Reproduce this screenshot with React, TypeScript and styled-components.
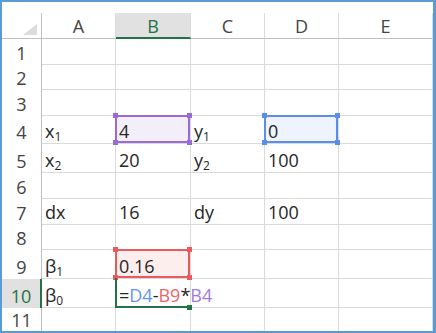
import React from 'react'
import styled, { createGlobalStyle } from 'styled-components'

type Tone = 'purple' | 'blue' | 'red'

interface ICell {
	content?: React.ReactNode
	range?: Tone
	active?: boolean
}

const tones: Record<Tone, { line: string; fill: string; text: string }> = {
	purple: { line: '#9a6bd4', fill: '#f2eefa', text: '#a37ade' },
	blue: { line: '#5b8dea', fill: '#eef3fd', text: '#6395ee' },
	red: { line: '#e85a5c', fill: '#fdeeee', text: '#ee6567' },
}

const COLS = ['A', 'B', 'C', 'D', 'E']
const ROWS = [1, 2, 3, 4, 5, 6, 7, 8, 9, 10, 11]
const ACTIVE_COL = 'B'
const ACTIVE_ROW = 10

const GlobalStyle = createGlobalStyle`
	html, body {
		margin: 0;
		padding: 0;
		background: #fff;
	}
	body {
		font-family: "Open Sans", "Segoe UI", sans-serif;
	}
`

const Sub = styled.sub`
	font-size: 12px;
	line-height: 0;
	vertical-align: -3px;
`

const Ref = styled.span<{ $tone: Tone }>`
	color: ${(p) => tones[p.$tone].text};
`

const cells: Record<string, ICell> = {
	A4: { content: <>x<Sub>1</Sub></> },
	B4: { content: '4', range: 'purple' },
	C4: { content: <>y<Sub>1</Sub></> },
	D4: { content: '0', range: 'blue' },
	A5: { content: <>x<Sub>2</Sub></> },
	B5: { content: '20' },
	C5: { content: <>y<Sub>2</Sub></> },
	D5: { content: '100' },
	A7: { content: 'dx' },
	B7: { content: '16' },
	C7: { content: 'dy' },
	D7: { content: '100' },
	A9: { content: <>β<Sub>1</Sub></> },
	B9: { content: '0.16', range: 'red' },
	A10: { content: <>β<Sub>0</Sub></> },
	B10: {
		active: true,
		content: (
			<>
				=<Ref $tone="blue">D4</Ref>-<Ref $tone="red">B9</Ref>*<Ref $tone="purple">B4</Ref>
			</>
		),
	},
}

const App: React.FC = () => {
	return (
		<>
			<GlobalStyle />
			<Sheet>
				<Grid>
					<Corner />
					{COLS.map((c) => (
						<ColHeader key={c} $active={c === ACTIVE_COL}>
							{c}
						</ColHeader>
					))}
					{ROWS.map((r) => (
						<React.Fragment key={r}>
							<RowHeader $active={r === ACTIVE_ROW}>{r}</RowHeader>
							{COLS.map((c) => {
								const spec = cells[c + r] || {}
								return (
									<Cell key={c + r}>
										{spec.range && (
											<Range $tone={spec.range}>
												<Handle $v="top" $h="left" />
												<Handle $v="top" $h="right" />
												<Handle $v="bottom" $h="left" />
												<Handle $v="bottom" $h="right" />
											</Range>
										)}
										{spec.active && <ActiveFrame />}
										{spec.content && <Value>{spec.content}</Value>}
									</Cell>
								)
							})}
						</React.Fragment>
					))}
				</Grid>
			</Sheet>
		</>
	)
}

const Sheet = styled.div`
	width: 436px;
	height: 333px;
	box-sizing: border-box;
	border: 2px solid #5b9bd5;
	border-right-width: 3px;
	padding-top: 11px;
	background: #fff;
	overflow: hidden;
`
const Grid = styled.div`
	display: grid;
	grid-template-columns: 40px 74px 75px 74px 74px 94px;
	grid-template-rows: 26px 26px 25px 26px 28px 29px 26px 26px 25px 29px 29px 24px;
	font-size: 18px;
	line-height: 20px;
`
const Corner = styled.div`
	position: relative;
	border-right: 1px solid #bfbfbf;
	border-bottom: 1px solid #bfbfbf;

	&::after {
		content: '';
		position: absolute;
		right: 4px;
		bottom: 3px;
		width: 14px;
		height: 11px;
		background: #dcdcdc;
		clip-path: polygon(100% 0, 100% 100%, 0 100%);
	}
`
const ColHeader = styled.div<{ $active?: boolean }>`
	display: flex;
	align-items: flex-end;
	justify-content: center;
	box-sizing: border-box;
	padding-bottom: ${(p) => (p.$active ? '1px' : '2px')};
	border-right: 1px solid #dadada;
	border-bottom: ${(p) => (p.$active ? '2px solid #217346' : '1px solid #bfbfbf')};
	background: ${(p) => (p.$active ? '#e1e1e1' : '#fff')};
	color: ${(p) => (p.$active ? '#217346' : '#444')};
`
const RowHeader = styled.div<{ $active?: boolean }>`
	display: flex;
	align-items: flex-end;
	justify-content: center;
	box-sizing: border-box;
	padding-bottom: 2px;
	border-right: ${(p) => (p.$active ? '2px solid #217346' : '1px solid #bfbfbf')};
	background: ${(p) => (p.$active ? '#e1e1e1' : 'transparent')};
	color: ${(p) => (p.$active ? '#217346' : '#444')};
`
const Cell = styled.div`
	position: relative;
	display: flex;
	align-items: flex-end;
	box-sizing: border-box;
	min-width: 0;
	padding: 0 3px 2px;
	border-right: 1px solid #dadada;
	border-bottom: 1px solid #dadada;
	white-space: nowrap;
	color: #262626;
`
const Value = styled.span`
	position: relative;
	z-index: 2;
`
const Range = styled.div<{ $tone: Tone }>`
	position: absolute;
	top: -1px;
	left: -1px;
	right: 0;
	bottom: 0;
	z-index: 1;
	border: 2px solid ${(p) => tones[p.$tone].line};
	background: ${(p) => tones[p.$tone].fill};
	color: ${(p) => tones[p.$tone].line};
`
const Handle = styled.span<{ $v: 'top' | 'bottom'; $h: 'left' | 'right' }>`
	position: absolute;
	${(p) => p.$v}: -4px;
	${(p) => p.$h}: -4px;
	width: 5px;
	height: 5px;
	background: currentColor;
`
const ActiveFrame = styled.div`
	position: absolute;
	top: -1px;
	left: -1px;
	right: 0;
	bottom: -1px;
	z-index: 1;
	border-left: 2px solid #217346;
	border-bottom: 2px solid #217346;

	&::after {
		content: '';
		position: absolute;
		right: -2px;
		bottom: -4px;
		width: 5px;
		height: 5px;
		background: #217346;
	}
`

export default App
